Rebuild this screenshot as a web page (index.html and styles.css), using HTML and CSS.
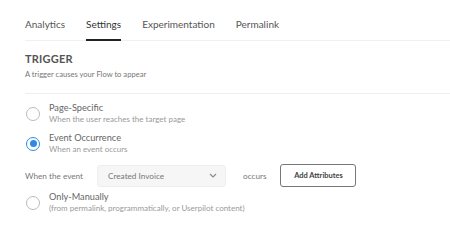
FILE: index.html
```html
<!DOCTYPE html>
<html lang="en">
  <head>
    <meta charset="UTF-8" />
    <title>Flow Settings</title>
    <link rel="stylesheet" href="styles.css">
  </head>
  <body>
    <nav class="tabs">
      <a class="tab">Analytics</a>
      <a class="tab active">Settings</a>
      <a class="tab">Experimentation</a>
      <a class="tab">Permalink</a>
    </nav>

    <section class="trigger">
      <h2>TRIGGER</h2>
      <p class="subtitle">A trigger causes your Flow to appear</p>

      <div class="options">
        <label class="option">
          <span class="radio"></span>
          <span class="option-text">
            <span class="option-title">Page-Specific</span>
            <span class="option-desc">When the user reaches the target page</span>
          </span>
        </label>

        <label class="option">
          <span class="radio checked"></span>
          <span class="option-text">
            <span class="option-title">Event Occurrence</span>
            <span class="option-desc">When an event occurs</span>
          </span>
        </label>

        <div class="event-row">
          <span>When the event</span>
          <div class="select">
            <span>Created Invoice</span>
            <svg width="8" height="5" viewBox="0 0 8 5"><path d="M1 1l3 3 3-3" fill="none" stroke="#888" stroke-width="1.1"/></svg>
          </div>
          <span>occurs</span>
          <button class="attr-btn">Add Attributes</button>
        </div>

        <label class="option">
          <span class="radio"></span>
          <span class="option-text">
            <span class="option-title">Only-Manually</span>
            <span class="option-desc">(from permalink, programmatically, or Userpilot content)</span>
          </span>
        </label>
      </div>
    </section>
  </body>
</html>
```

FILE: styles.css
```css
* {
  box-sizing: border-box;
  margin: 0;
  padding: 0;
}

body {
  font-family: "Lato", sans-serif;
  background: #fff;
  color: #555;
  padding-left: 25px;
  width: 450px;
  height: 244px;
  overflow: hidden;
}

.tabs {
  display: flex;
  gap: 21px;
  height: 41px;
  padding-top: 18px;
  border-bottom: 1px solid #f0f0f0;
}

.tab {
  font-size: 10px;
  color: #555;
  height: 23px;
  border-bottom: 2px solid transparent;
}

.tab.active {
  color: #333;
  border-bottom-color: #222;
}

.trigger h2 {
  margin-top: 11px;
  font-size: 11px;
  font-weight: 700;
  color: #555;
  letter-spacing: 0.2px;
}

.subtitle {
  margin-top: 4px;
  font-size: 7.6px;
  color: #777;
  padding-bottom: 14px;
  border-bottom: 1px solid #eee;
}

.options {
  display: flex;
  flex-direction: column;
}

.option {
  display: flex;
  align-items: center;
  gap: 9px;
  padding-left: 1px;
}

.options .option:first-child {
  margin-top: 8px;
}

.option + .option {
  margin-top: 7px;
}

.radio {
  width: 14px;
  height: 14px;
  border: 1px solid #bbb;
  border-radius: 50%;
  flex-shrink: 0;
  display: flex;
  align-items: center;
  justify-content: center;
}

.radio.checked {
  border: 1.5px solid #2e8ae6;
}

.radio.checked::after {
  content: "";
  width: 7px;
  height: 7px;
  border-radius: 50%;
  background: #2e8ae6;
}

.option-text {
  display: flex;
  flex-direction: column;
}

.option-title {
  font-size: 9.2px;
  color: #666;
  line-height: 12px;
}

.option-desc {
  font-size: 8px;
  color: #999;
  line-height: 11px;
}

.event-row {
  display: flex;
  align-items: center;
  margin: 9px 0 4px;
  font-size: 8.2px;
  color: #777;
}

.select {
  width: 129px;
  height: 22px;
  margin-left: 14px;
  margin-right: 17px;
  background: #f6f6f6;
  border: 1px solid #eee;
  border-radius: 3px;
  display: flex;
  align-items: center;
  justify-content: space-between;
  padding: 0 8px 0 10px;
  color: #777;
}

.attr-btn {
  margin-left: 14px;
  width: 76px;
  height: 23px;
  background: #fff;
  border: 1px solid #777;
  border-radius: 3px;
  font-family: "Lato", sans-serif;
  font-size: 7.5px;
  font-weight: 700;
  color: #444;
}
```
